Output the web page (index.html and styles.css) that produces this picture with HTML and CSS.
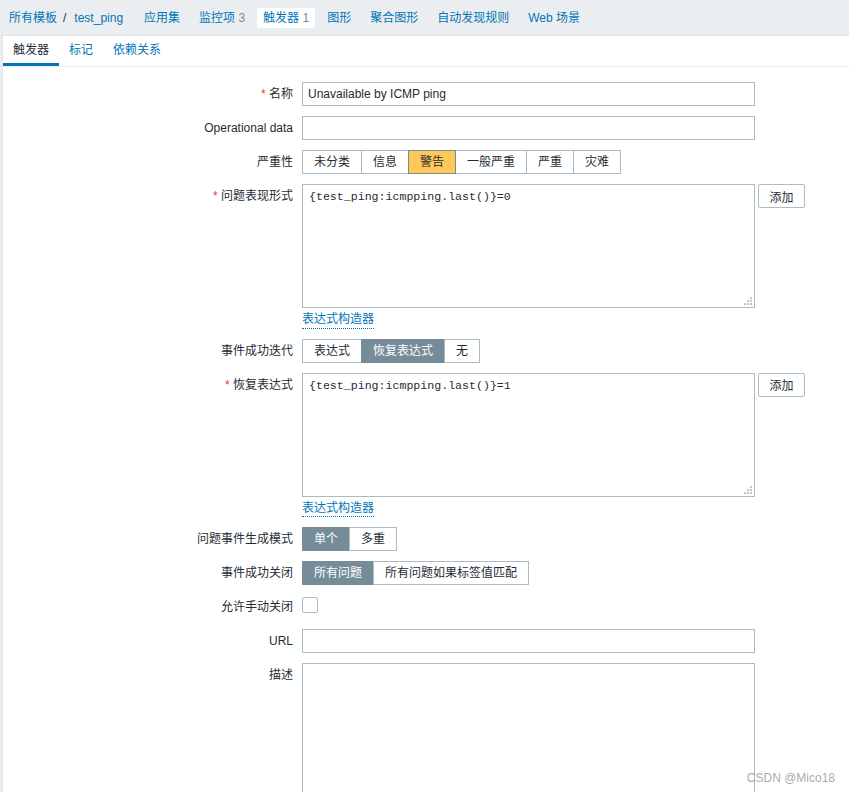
FILE: index.html
```html
<!DOCTYPE html>
<html lang="zh">
<head>
<meta charset="utf-8">
<title>触发器</title>
<link rel="stylesheet" href="styles.css">
</head>
<body>
<div class="topnav">
  <div class="crumbs"><a class="lnk">所有模板</a><span class="sep">/</span><a class="lnk">test_ping</a></div>
  <a class="nav-item">应用集</a>
  <a class="nav-item">监控项 <span class="cnt">3</span></a>
  <a class="nav-item active">触发器 <span class="cnt">1</span></a>
  <a class="nav-item">图形</a>
  <a class="nav-item">聚合图形</a>
  <a class="nav-item">自动发现规则</a>
  <a class="nav-item">Web 场景</a>
</div>
<div class="panel">
  <div class="tabs">
    <a class="tab active">触发器</a>
    <a class="tab">标记</a>
    <a class="tab">依赖关系</a>
  </div>
  <div class="form">
    <div class="row">
      <div class="lbl"><span class="req">*</span> 名称</div>
      <div class="ctl"><input class="inp" type="text" value="Unavailable by ICMP ping"></div>
    </div>
    <div class="row">
      <div class="lbl">Operational data</div>
      <div class="ctl"><input class="inp" type="text" value=""></div>
    </div>
    <div class="row">
      <div class="lbl">严重性</div>
      <div class="ctl">
        <div class="seg">
          <span>未分类</span><span>信息</span><span class="warn">警告</span><span>一般严重</span><span>严重</span><span>灾难</span>
        </div>
      </div>
    </div>
    <div class="row">
      <div class="lbl"><span class="req">*</span> 问题表现形式</div>
      <div class="ctl">
        <div class="ta-line">
          <div class="ta-wrap">
            <textarea class="ta">{test_ping:icmpping.last()}=0</textarea>
            <svg class="grip" width="8" height="8" viewBox="0 0 8 8"><rect x="6" y="0" width="2" height="2"/><rect x="3" y="3" width="2" height="2"/><rect x="6" y="3" width="2" height="2"/><rect x="0" y="6" width="2" height="2"/><rect x="3" y="6" width="2" height="2"/><rect x="6" y="6" width="2" height="2"/></svg>
          </div>
          <button class="btn" type="button">添加</button>
        </div>
        <a class="link">表达式构造器</a>
      </div>
    </div>
    <div class="row">
      <div class="lbl">事件成功迭代</div>
      <div class="ctl">
        <div class="seg">
          <span>表达式</span><span class="on">恢复表达式</span><span>无</span>
        </div>
      </div>
    </div>
    <div class="row">
      <div class="lbl"><span class="req">*</span> 恢复表达式</div>
      <div class="ctl">
        <div class="ta-line">
          <div class="ta-wrap">
            <textarea class="ta">{test_ping:icmpping.last()}=1</textarea>
            <svg class="grip" width="8" height="8" viewBox="0 0 8 8"><rect x="6" y="0" width="2" height="2"/><rect x="3" y="3" width="2" height="2"/><rect x="6" y="3" width="2" height="2"/><rect x="0" y="6" width="2" height="2"/><rect x="3" y="6" width="2" height="2"/><rect x="6" y="6" width="2" height="2"/></svg>
          </div>
          <button class="btn" type="button">添加</button>
        </div>
        <a class="link">表达式构造器</a>
      </div>
    </div>
    <div class="row">
      <div class="lbl">问题事件生成模式</div>
      <div class="ctl">
        <div class="seg"><span class="on">单个</span><span>多重</span></div>
      </div>
    </div>
    <div class="row">
      <div class="lbl">事件成功关闭</div>
      <div class="ctl">
        <div class="seg"><span class="on">所有问题</span><span>所有问题如果标签值匹配</span></div>
      </div>
    </div>
    <div class="row">
      <div class="lbl">允许手动关闭</div>
      <div class="ctl"><span class="chk"></span></div>
    </div>
    <div class="row">
      <div class="lbl">URL</div>
      <div class="ctl"><input class="inp" type="text" value=""></div>
    </div>
    <div class="row">
      <div class="lbl">描述</div>
      <div class="ctl">
        <div class="ta-wrap">
          <textarea class="ta ta-desc"></textarea>
          <svg class="grip" width="8" height="8" viewBox="0 0 8 8"><rect x="6" y="0" width="2" height="2"/><rect x="3" y="3" width="2" height="2"/><rect x="6" y="3" width="2" height="2"/><rect x="0" y="6" width="2" height="2"/><rect x="3" y="6" width="2" height="2"/><rect x="6" y="6" width="2" height="2"/></svg>
        </div>
      </div>
    </div>
  </div>
</div>
<div class="watermark">CSDN @Mico18</div>
</body>
</html>
```

FILE: styles.css
```css
html, body {
  margin: 0;
  padding: 0;
}
body {
  background: #ebeef0;
  font-family: "Liberation Sans", Arial, "Noto Sans CJK SC", sans-serif;
  font-size: 12px;
  color: #1f2c33;
  overflow: hidden;
  height: 792px;
}
a { text-decoration: none; cursor: pointer; }

.topnav {
  height: 35px;
  border-bottom: 1px solid #dfe4e7;
  display: flex;
  align-items: center;
  padding-left: 2px;
  gap: 5px;
}
.crumbs {
  padding: 0 9px 0 7px;
  line-height: 20px;
  display: flex;
}
.lnk { color: #0275b8; }
.sep { margin: 0 8px 0 6px; color: #1f2c33; }
.nav-item {
  padding: 0 7px;
  line-height: 20px;
  color: #0275b8;
  border-radius: 2px;
}
.nav-item.active {
  background: #fff;
  padding: 0 6px;
}
.cnt { color: #768d99; }

.panel {
  background: #fff;
  margin-left: 2px;
  border-left: 1px solid #dfe4e7;
  height: 760px;
}
.tabs {
  display: flex;
  height: 30px;
  border-bottom: 1px solid #ebeef0;
}
.tab {
  padding: 0 10px;
  line-height: 28px;
  color: #0275b8;
}
.tab.active {
  color: #1f2c33;
  box-shadow: inset 0 -3px 0 #0275b8;
}

.form {
  padding-top: 15px;
  display: flex;
  flex-direction: column;
  gap: 10px;
}
.row { display: flex; }
.lbl {
  width: 299px;
  flex-shrink: 0;
  box-sizing: border-box;
  padding-right: 9px;
  text-align: right;
  line-height: 24px;
}
.req { color: #e33734; }
.ctl {
  display: flex;
  flex-direction: column;
  align-items: flex-start;
}
.inp {
  width: 453px;
  height: 24px;
  box-sizing: border-box;
  border: 1px solid #acbbc2;
  padding: 0 5px;
  margin: 0;
  font-family: inherit;
  font-size: 12px;
  color: #1f2c33;
  background: #fff;
  outline: none;
}
.seg { display: flex; }
.seg span {
  border: 1px solid #acbbc2;
  padding: 0 11px;
  line-height: 22px;
  margin-left: -1px;
  background: #fff;
}
.seg span:first-child { margin-left: 0; }
.seg span.on {
  background: #768d99;
  border-color: #768d99;
  color: #fff;
}
.seg span.warn {
  background: #ffc859;
  border-color: #768d99;
  position: relative;
  z-index: 1;
}

.ta-line {
  display: flex;
  gap: 3px;
  align-items: flex-start;
}
.ta-wrap { position: relative; }
.ta {
  display: block;
  width: 453px;
  height: 124px;
  box-sizing: border-box;
  border: 1px solid #acbbc2;
  padding: 4px 6px;
  margin: 0;
  font-family: "Liberation Mono", "Courier New", monospace;
  font-size: 11.6px;
  line-height: 15px;
  color: #1f2c33;
  resize: none;
  outline: none;
  background: #fff;
}
.ta-desc { height: 140px; }
.grip {
  position: absolute;
  right: 3px;
  bottom: 3px;
  fill: #c0c6ca;
}
.btn {
  width: 47px;
  height: 24px;
  padding: 0;
  box-sizing: border-box;
  border: 1px solid #acbbc2;
  border-radius: 2px;
  background: #fff;
  font-family: inherit;
  font-size: 12px;
  color: #1f2c33;
  margin: 0;
}
.link {
  color: #0275b8;
  border-bottom: 1px dotted #0275b8;
  margin-top: 4px;
  line-height: 15.5px;
}
.chk {
  display: block;
  width: 16px;
  height: 16px;
  box-sizing: border-box;
  border: 1px solid #acbbc2;
  border-radius: 2px;
  margin-top: 2px;
  background: #fff;
}
.watermark {
  position: absolute;
  right: 14px;
  top: 771px;
  color: rgba(120, 120, 120, 0.65);
  font-size: 12px;
  line-height: 14px;
}
```
